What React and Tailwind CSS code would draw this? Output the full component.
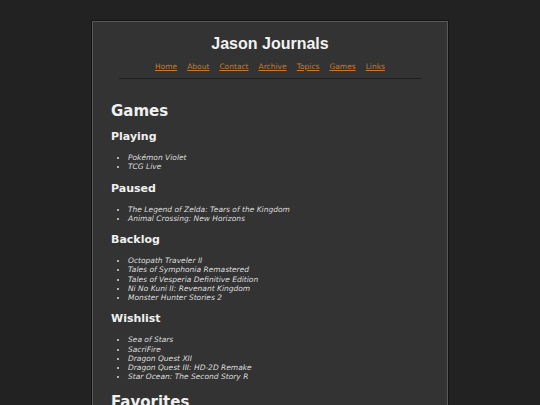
import React from 'react';

const navLinks = ["Home", "About", "Contact", "Archive", "Topics", "Games", "Links"];

const sections = [
  { title: "Playing", items: ["Pokémon Violet", "TCG Live"] },
  { title: "Paused", items: ["The Legend of Zelda: Tears of the Kingdom", "Animal Crossing: New Horizons"] },
  {
    title: "Backlog",
    items: [
      "Octopath Traveler II",
      "Tales of Symphonia Remastered",
      "Tales of Vesperia Definitive Edition",
      "Ni No Kuni II: Revenant Kingdom",
      "Monster Hunter Stories 2",
    ],
  },
  {
    title: "Wishlist",
    items: [
      "Sea of Stars",
      "SacriFire",
      "Dragon Quest XII",
      "Dragon Quest III: HD-2D Remake",
      "Star Ocean: The Second Story R",
    ],
  },
];

const App = () => {
  return (
    <div className="min-h-screen bg-[#222222] pt-[20px] font-['DejaVu_Sans',Verdana,sans-serif]">
      <div className="w-[358px] mx-auto min-h-[400px] bg-[#333333] border border-[#141414] shadow-[inset_0_0_0_1px_#595959] pb-10">
        {/* Header */}
        <header className="pt-[14px] text-center">
          <h1 className="text-[16px] leading-[18px] font-bold text-[#f2f2f2] font-['Liberation_Sans',Arial,sans-serif]">
            Jason Journals
          </h1>
          <nav className="mt-[9px] flex justify-center gap-[10px] text-[7.5px] leading-[10px]">
            {navLinks.map((link) => (
              <a key={link} href="#" className="text-[#c8782c] underline">
                {link}
              </a>
            ))}
          </nav>
          <hr className="mt-[6px] w-[302px] mx-auto border-0 h-px bg-[#1e1e1e]" />
        </header>

        {/* Main */}
        <main className="px-[19px] pt-[23px] text-[#dddddd]">
          <h1 className="text-[15px] leading-[18px] font-bold text-[#f0f0f0]">Games</h1>
          {sections.map((section) => (
            <section key={section.title} className="mt-[10px]">
              <h2 className="text-[11px] leading-[13px] font-bold text-[#f0f0f0]">{section.title}</h2>
              <ul className="mt-[10px] list-disc pl-[17px] text-[7.5px] leading-[9.25px] italic">
                {section.items.map((item) => (
                  <li key={item}>{item}</li>
                ))}
              </ul>
            </section>
          ))}
          <h1 className="mt-[11px] text-[15px] leading-[18px] font-bold text-[#f0f0f0]">Favorites</h1>
        </main>
      </div>
    </div>
  );
};

export default App;
